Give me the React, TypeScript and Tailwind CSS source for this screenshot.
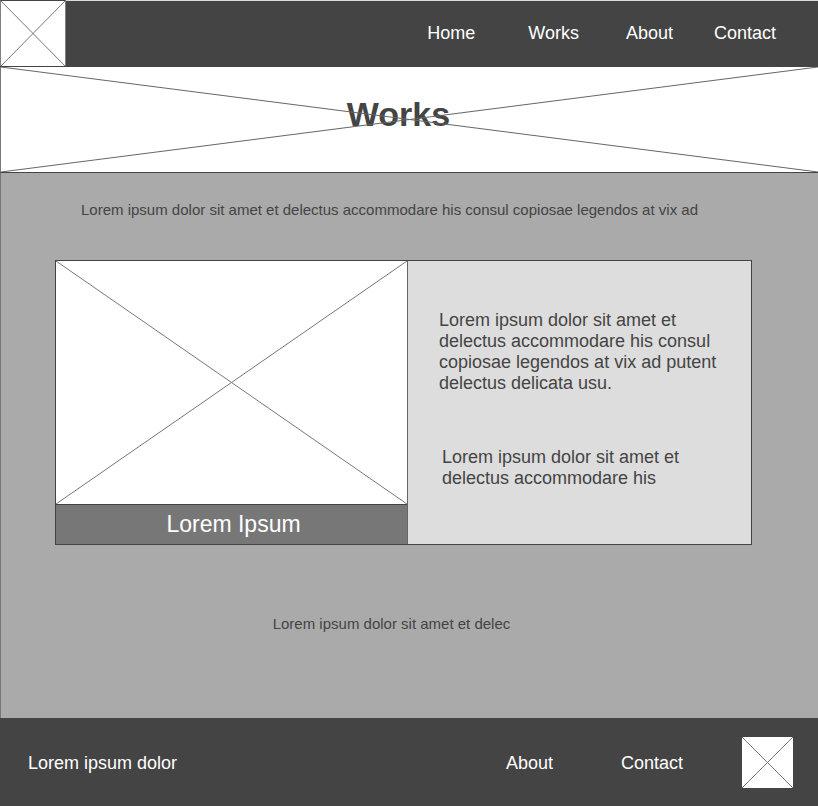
const NAV_LINKS = [
  { label: "Home", spacing: "mr-3" },
  { label: "Works", spacing: "mr-1.5" },
  { label: "About", spacing: "" },
  { label: "Contact", spacing: "" },
];

/** The two corner-to-corner strokes of a placeholder image. */
function Cross({ className, color = "#777777" }: { className: string; color?: string }) {
  return (
    <svg
      className={className}
      viewBox="0 0 100 100"
      preserveAspectRatio="none"
      fill="none"
      stroke={color}
      aria-hidden="true"
    >
      <path d="M0 0L100 100M0 100L100 0" vectorEffect="non-scaling-stroke" />
    </svg>
  );
}

export default function App() {
  return (
    <div className="flex min-h-screen flex-col bg-[#aaaaaa] font-['Liberation_Sans',Arial,sans-serif] text-[#444444]">
      <header className="flex h-[67px] items-stretch border-b border-[#444444] bg-[#444444] text-lg text-white">
        <a
          href="#home"
          aria-label="Home page"
          className="block w-[66px] border-x border-t border-x-[#808080] border-t-[#444444] bg-white"
        >
          <Cross className="size-full" />
        </a>
        <nav
          aria-label="Main"
          className="flex flex-1 items-center justify-end gap-[41px] border-t border-[#dddddd] pr-[42px] pb-0.5"
        >
          {NAV_LINKS.map((link) => (
            <a key={link.label} href={`#${link.label.toLowerCase()}`} className={link.spacing}>
              {link.label}
            </a>
          ))}
        </nav>
      </header>

      <section className="relative flex h-[106px] items-center justify-center border-b border-l border-b-[#444444] border-l-[#777777] bg-white pr-[22px] pb-3">
        <h1 className="text-[34px] leading-10 font-bold">Works</h1>
        <Cross className="absolute inset-0 size-full" color="#666666" />
      </section>

      <main className="flex flex-1 flex-col border-l border-[#777777]">
        <p className="pt-[27px] pr-10 text-center text-[15px] leading-5">
          Lorem ipsum dolor sit amet et delectus accommodare his consul copiosae legendos at vix ad
        </p>

        <article className="mt-10 mr-[66px] ml-[54px] grid grid-cols-[352fr_343fr] border border-[#444444]">
          <figure className="flex flex-col border-r border-[#666666]">
            <div className="h-[243px] bg-white">
              <Cross className="size-full" />
            </div>
            <figcaption className="border-t border-[#444444] bg-[#777777] pl-1 text-center text-[23px] leading-[39px] text-white">
              Lorem Ipsum
            </figcaption>
          </figure>
          <div className="bg-[#dddddd] pt-[49px] pr-5 pl-[31px] text-lg leading-[21px]">
            <p>
              Lorem ipsum dolor sit amet et delectus accommodare his consul copiosae legendos at vix
              ad putent delectus delicata usu.
            </p>
            <p className="mt-[53px] pr-5 pl-[3px]">
              Lorem ipsum dolor sit amet et delectus accommodare his
            </p>
          </div>
        </article>

        <p className="mt-[69px] pr-9 pb-[84px] text-center text-[15px] leading-5">
          Lorem ipsum dolor sit amet et delec
        </p>
      </main>

      <footer className="flex h-[88px] items-center bg-[#444444] pr-[25px] pl-7 text-lg text-white">
        <p className="flex-1 pt-0.5">Lorem ipsum dolor</p>
        <nav aria-label="Footer" className="mr-[59px] flex gap-[68px] pt-0.5">
          <a href="#about">About</a>
          <a href="#contact">Contact</a>
        </nav>
        <a href="#home" aria-label="Back to home" className="block size-[51px] bg-white">
          <Cross className="size-full" />
        </a>
      </footer>
    </div>
  );
}
